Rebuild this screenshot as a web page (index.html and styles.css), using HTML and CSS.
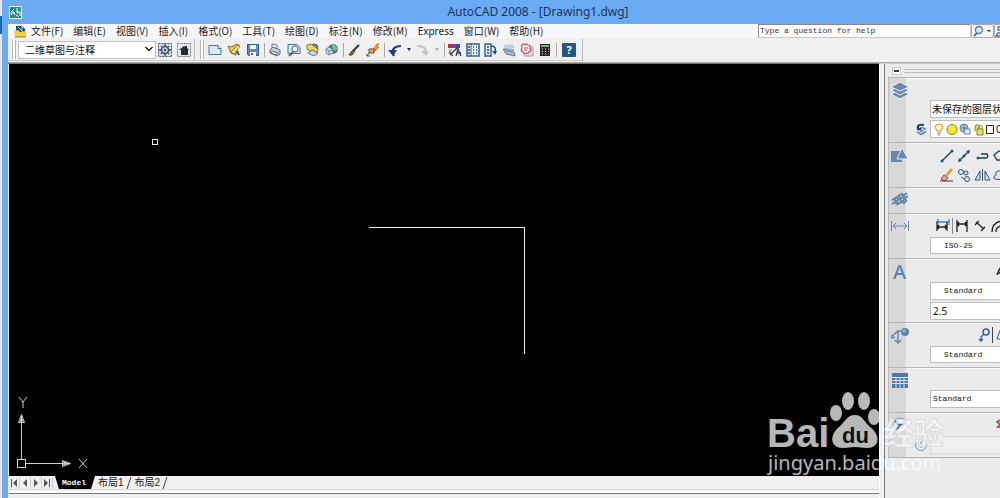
FILE: index.html
```html
<!DOCTYPE html>
<html lang="zh-CN">
<head>
<meta charset="utf-8">
<title>AutoCAD 2008 - [Drawing1.dwg]</title>
<link rel="stylesheet" href="styles.css">
</head>
<body>
<div class="edge"><span class="edge-tab"></span></div>
<div class="window">
  <header class="titlebar">
    <svg class="app-icon" width="13" height="13" viewBox="0 0 13 13"><rect width="13" height="13" fill="#e4f3ef"/><rect x="1" y="1" width="11" height="11" fill="#2b8f86"/><path d="M2 9L4 3l2 6M3 7h3M8 2v8M8 6h3v4H8" stroke="#fff" fill="none"/><path d="M2 2l9 9" stroke="#145a5c"/></svg>
    <h1>AutoCAD 2008 - [Drawing1.dwg]</h1>
  </header>

  <nav class="menubar">
    <svg width="13" height="13" viewBox="0 0 13 13"><path d="M2 1h6l3 3v6H2z" fill="#234a78"/><path d="M4 2l5 5M8 1v4" stroke="#b9d4ec"/><path d="M0 6l4-1 2 2 6-1v6H1z" fill="#f2cf3e"/><path d="M1 12h11" stroke="#a87d14"/></svg>
    <button>文件(F)</button><button>编辑(E)</button><button>视图(V)</button><button>插入(I)</button><button>格式(O)</button><button>工具(T)</button><button>绘图(D)</button><button>标注(N)</button><button>修改(M)</button><button class="latin">Express</button><button>窗口(W)</button><button>帮助(H)</button>
    <div class="help">
      <input type="text" aria-label="Help" value="Type a question for help">
      <button class="search" aria-label="Search"><svg width="20" height="12" viewBox="0 0 20 12"><circle cx="7" cy="5" r="3.5" fill="#dbe8f8" stroke="#5974a0" stroke-width="1.3"/><path d="M5 8L2 11" stroke="#5974a0" stroke-width="2"/><path d="M15 5h4l-2 2z" fill="#333"/></svg></button>
      <button class="more" aria-label="Communication center"><svg width="6" height="12" viewBox="0 0 6 12"><path d="M6 2H3v3h3M6 8H3l-2 3h5" fill="none" stroke="#5974a0" stroke-width="1.4"/></svg></button>
    </div>
  </nav>

  <div class="toolbars">
    <div class="toolbar">
      <span class="grip"></span>
      <select class="workspace" aria-label="Workspace"><option>二维草图与注释</option></select>
      <div class="tools">
        <button aria-label="Workspace settings"><svg width="14" height="14" viewBox="0 0 14 14"><rect x=".5" y=".5" width="13" height="13" fill="#d0dce8" stroke="#44597a" stroke-dasharray="2 1"/><circle cx="7" cy="7" r="3.5" fill="none" stroke="#3b4b60" stroke-width="1.5"/><circle cx="7" cy="7" r="1.2" fill="#34455c"/><path d="M7 1v2M7 11v2M1 7h2M11 7h2M3 3l1 1M10 10l1 1M11 3l-1 1M4 10l-1 1" stroke="#34455c" stroke-width="1.3"/></svg></button>
        <button aria-label="My workspace"><svg width="14" height="14" viewBox="0 0 14 14"><rect x=".5" y=".5" width="13" height="13" fill="#e4e6e8" stroke="#778" stroke-dasharray="2 1"/><path d="M2 7l5-4 1 1V3h2v2l2 2h-1v5H4V7z" fill="#222a33"/></svg></button>
      </div>
    </div>
    <div class="toolbar standard">
      <span class="grip"></span>
      <div class="tools">
        <button aria-label="New"><svg width="14" height="14" viewBox="0 0 14 14"><path d="M1 2.5h9l3 3v6H1z" fill="#d8ebfa" stroke="#4f7395"/><path d="M10 2.5v3h3" fill="#fff" stroke="#4f7395"/></svg></button>
        <button aria-label="Open"><svg width="14" height="14" viewBox="0 0 14 14"><path d="M1 3l4 1 1-1 5-2-2 11-5-2z" fill="#efc94e" stroke="#8f6c1d"/><path d="M4 9l7-7 2 1-6 8z" fill="#fff0a6" stroke="#8f6c1d"/><path d="M10 8l2 4" stroke="#43617e" stroke-width="2"/></svg></button>
        <button aria-label="Save"><svg width="14" height="14" viewBox="0 0 14 14"><path d="M1.5 1.5h11v11h-10l-1-1z" fill="#5e8ac0" stroke="#325b90"/><path d="M4 2h6v4H4z" fill="#e8f1fa"/><path d="M4 9h6v4H4z" fill="#fff"/><path d="M5 10h2v2H5z" fill="#325b90"/></svg></button>
        <i class="sep"></i>
        <button aria-label="Plot"><svg width="14" height="14" viewBox="0 0 14 14"><path d="M4 1l5 1v4l-5-1z" fill="#fff" stroke="#60758e"/><path d="M2 7l3-3 7 3v4l-3 2-7-3z" fill="#c5cfdd" stroke="#536b87"/><path d="M4 8l6 2-2 2-5-2z" fill="#fff" stroke="#536b87"/></svg></button>
        <button aria-label="Plot preview"><svg width="14" height="14" viewBox="0 0 14 14"><path d="M1 1.5h9l3 3v6H1z" fill="#cfe3f4" stroke="#4f7395"/><circle cx="8" cy="6" r="3" fill="#eef7ff" stroke="#426384"/><path d="M6 9l-4 4" stroke="#426384" stroke-width="2"/></svg></button>
        <button aria-label="Publish"><svg width="14" height="14" viewBox="0 0 14 14"><circle cx="8" cy="5" r="4" fill="#5b89b8" stroke="#345b83"/><path d="M1 2l4-1 7 5-1 3-4 1-6-4z" fill="#f1d35b" stroke="#8f792a"/><path d="M2 10l4-3 6 3-4 3z" fill="#cddae7" stroke="#5b7190"/></svg></button>
        <button aria-label="3D DWF"><svg width="14" height="14" viewBox="0 0 14 14"><circle cx="8" cy="6" r="5" fill="#3f7da0"/><path d="M6 1l4 1 3 4-3 2-2-2z" fill="#86bb8a"/><path d="M1 6l3-2 4 3v3l-4 2-3-2z" fill="#d0dde8" stroke="#71869b"/><path d="M1 6l3 2 4-1M4 8v4" fill="none" stroke="#71869b"/></svg></button>
        <i class="sep"></i>
        <button aria-label="Match properties"><svg width="14" height="14" viewBox="0 0 14 14"><path d="M12 2L6 8" stroke="#333" stroke-width="2"/><path d="M6 7l2 1-3 4H2l2-3z" fill="#a85828" stroke="#55331f"/></svg></button>
        <button aria-label="Block editor"><svg width="14" height="14" viewBox="0 0 14 14"><path d="M11 1L7 6h3l-2 3 5-5h-3l3-3z" fill="#ffd438" stroke="#a77916"/><path d="M3 6h5v4H3z" fill="#f0a05b" stroke="#74492b"/><path d="M3 10l-2 3M1 11v2h3" stroke="#405370" fill="none"/></svg></button>
        <i class="sep"></i>
        <button aria-label="Undo"><svg width="14" height="14" viewBox="0 0 14 14"><path d="M6 13C3 8 5 3 13 3" fill="none" stroke="#1d3f76" stroke-width="2.2"/><path d="M0 7h9L5 13z" fill="#1d3f76"/></svg></button>
        <button class="drop" aria-label="Undo list"><svg width="6" height="4" viewBox="0 0 6 4"><path d="M1 0h4L3 3z" fill="#1b2c55"/></svg></button>
        <button aria-label="Redo"><svg width="14" height="14" viewBox="0 0 14 14"><path d="M1 3c7 0 10 3 8 7" fill="none" stroke="#bfc2c6" stroke-width="2"/><path d="M5 8h8l-3 5z" fill="#bfc2c6"/></svg></button>
        <button class="drop" aria-label="Redo list"><svg width="6" height="4" viewBox="0 0 6 4"><path d="M1 0h4L3 3z" fill="#aaa"/></svg></button>
        <i class="sep"></i>
        <button aria-label="Properties"><svg width="14" height="14" viewBox="0 0 14 14"><path d="M0 1h4v4H0z" fill="#bd3030"/><path d="M4 1h4v4H4z" fill="#8d39ac"/><path d="M8 1h4v4H8z" fill="#3153b8"/><path d="M1 6h3v3H1z" fill="#e0b040"/><path d="M2 12l7-7 2 2M8 13l2-7 3 7M9 10h4M1 9l4 4" fill="none" stroke="#38404e" stroke-width="1.3"/></svg></button>
        <button aria-label="DesignCenter"><svg width="14" height="14" viewBox="0 0 14 14"><rect x="1" y="1" width="12" height="12" fill="#e6f0f7" stroke="#385d7f" stroke-width="1.5"/><path d="M5 1v12" stroke="#385d7f"/><path d="M2 4h2M2 7h2M2 10h2M7 4h1M10 4h1M7 7h1M10 7h1M7 10h1M10 10h1" stroke="#254e74" stroke-width="1.6"/></svg></button>
        <button aria-label="Tool palettes"><svg width="14" height="14" viewBox="0 0 14 14"><path d="M1 1h6v12H1z" fill="#dceaf5" stroke="#385d7f" stroke-width="1.4"/><path d="M3 4h2M3 7h2M3 10h2" stroke="#254e74" stroke-width="1.5"/><path d="M7 3c4 0 5 2 4 7" fill="none" stroke="#254e74" stroke-width="1.5"/><path d="M8 8h5l-2 4z" fill="#254e74"/></svg></button>
        <button aria-label="Sheet set"><svg width="14" height="14" viewBox="0 0 14 14"><path d="M1 2l10-1 2 4-10 1z" fill="#bdd1df"/><path d="M2 5l10 1v3L3 8z" fill="#91afc3"/><path d="M1 6l4 2 7 1 1 4-9-2z" fill="#aabfcd" stroke="#638097"/></svg></button>
        <button aria-label="Markup set"><svg width="14" height="14" viewBox="0 0 14 14"><path d="M4 4h9v9H4z" fill="#d8dce6" stroke="#9aa3b3"/><path d="M2 2q1.500-2 3 0q1.500-2 3 0q3 0 2 3q2 2-1 4q-1 2-3 1q-2 1-3-1q-3-1-1-4q-1-2 0-3z" fill="#fff3f3" stroke="#d04450" stroke-width="1.2"/><path d="M4 5h4M4 7h3" stroke="#d04450"/></svg></button>
        <button aria-label="Calculator"><svg width="14" height="14" viewBox="0 0 14 14"><path d="M2 1h10v12H2z" fill="#292321"/><path d="M3 2h8v2H3z" fill="#75b685"/><path d="M4 6h1M7 6h1M10 6h1M4 8.500h1M7 8.500h1M4 11h1M7 11h1" stroke="#eee"/><path d="M10 8.500h1M10 11h1" stroke="#e95353"/></svg></button>
        <i class="sep"></i>
        <button class="about" aria-label="Help">?</button>
      </div>
    </div>
  </div>

  <div class="workarea">
    <section class="document">
      <main class="model">
        <svg class="drawing" width="560" height="300" viewBox="0 0 560 300" shape-rendering="crispEdges"><path d="M360 163.500h155.500v126" fill="none" stroke="#eee"/><rect x="143.500" y="75.500" width="5" height="5" fill="none" stroke="#eee"/></svg>
        <svg class="ucs" width="84" height="82" viewBox="0 0 84 82" fill="none" stroke="#d0d0d0"><rect x="8.500" y="65.500" width="8" height="8"/><path d="M12.500 65V22M17 69.500h44M9.500 28.500l3-8 3 8zM11 28l1.500-5 1.500 5M53.500 66.500l8 3-8 3zM54 68l5 1.500-5 1.500"/><path d="M10 3l4 5 4-5M14 8v6M70 65l8 9M78 65l-8 9"/></svg>
      </main>
      <div class="tabs">
        <button class="nav" aria-label="First"><svg width="8" height="8" viewBox="0 0 8 8"><path d="M1 0v8h1V0zM7 0v8L3 4z" fill="#555"/></svg></button><button class="nav" aria-label="Previous"><svg width="8" height="8" viewBox="0 0 8 8"><path d="M6 0v8L2 4z" fill="#555"/></svg></button><button class="nav" aria-label="Next"><svg width="8" height="8" viewBox="0 0 8 8"><path d="M2 0v8l4-4z" fill="#555"/></svg></button><button class="nav" aria-label="Last"><svg width="8" height="8" viewBox="0 0 8 8"><path d="M1 0v8l4-4zM6 0v8h1V0z" fill="#555"/></svg></button>
        <button class="tab active">Model</button><button class="tab">布局1</button><svg width="6" height="12" viewBox="0 0 6 12"><path d="M1 12L5 0" stroke="#444"/></svg><button class="tab">布局2</button><svg width="6" height="12" viewBox="0 0 6 12"><path d="M1 12L5 0" stroke="#444"/></svg>
      </div>
      <div class="command"></div>
    </section>

    <aside class="dashboard">
      <div class="dash-head"><button aria-label="Minimize"></button><span></span></div>
      <section class="panel tall">
        <div class="side"><svg width="18" height="18" viewBox="0 0 18 18" stroke="#eef3f8"><path d="M0 12l9-4 9 4-9 5z" fill="#6689ad"/><path d="M0 8l9-4 9 4-9 5z" fill="#6689ad"/><path d="M0 5l9-5 9 5-9 4z" fill="#6689ad"/></svg></div>
        <div class="body low">
          <div class="field cjk">未保存的图层状</div>
          <div class="layer-row">
            <svg width="14" height="14" viewBox="0 0 14 14"><path d="M1 10l7-3 6 3-7 4zM1 7l7-3 6 3-7 4z" fill="#6689ad" stroke="#eef"/><path d="M5 8C2 4 5 2 10 3M3 7h4" fill="none" stroke="#213f66" stroke-width="2"/></svg>
            <div class="field icons">
              <svg width="62" height="13" viewBox="0 0 62 13"><path d="M3 8Q0 4 2 2q3-2 6 0q2 2-1 6z" fill="#fff5a0" stroke="#aa9a45"/><path d="M3 10h4M4 12h2" stroke="#777"/><circle cx="18" cy="6.500" r="5" fill="#eff02c" stroke="#7c8220"/><circle cx="30" cy="5" r="4" fill="#a8c5d8" stroke="#5e8199"/><path d="M31 6h5v5h-6z" fill="#e1eef5" stroke="#68889e"/><path d="M27 5h6M30 2v6" stroke="#5e8199"/><path d="M41 8V3q2-3 4 0v3M43 6h6v6h-6z" fill="#e8e05b" stroke="#8a8422"/><path d="M45 6V3q2-2 3 0v3" fill="none" stroke="#8a8422"/><path d="M52.500 2.500h7v8h-7z" fill="#fff" stroke="#222"/></svg><span>0</span>
            </div>
          </div>
        </div>
      </section>
      <section class="panel">
        <div class="side"><svg width="18" height="18" viewBox="0 0 18 18"><path d="M0 4h11v11H0z" fill="#6788ab"/><path d="M11 1l6 11H6z" fill="#6788ab" stroke="#e8edf3"/></svg></div>
        <div class="body palette">
          <svg width="61" height="14" viewBox="0 0 61 14"><g fill="none" stroke="#24384f" stroke-width="1.3"><path d="M3 12L13 2M20 12L30 2M38 9h9q3-1 1-4h-6"/><path d="M55 6l5-4 4 2v7h-6z" fill="#eee"/></g><g fill="#24577f"><circle cx="3" cy="12" r="1.500"/><circle cx="13" cy="2" r="1.500"/><circle cx="25" cy="7" r="1.500"/><circle cx="39" cy="9" r="1.500"/><path d="M27 2l4-1-1 4zM19 13l1-4 3 3z"/></g></svg>
          <svg width="61" height="14" viewBox="0 0 61 14"><path d="M13 1L7 8" stroke="#d9a846" stroke-width="3"/><path d="M5 7l4 3-3 3-4-2z" fill="#e6a0a0" stroke="#9b4b46"/><path d="M1 13h13" stroke="#333"/><g fill="#dbe6f0" stroke="#36506d"><circle cx="22" cy="4" r="2.500"/><circle cx="27" cy="5" r="2"/><circle cx="28" cy="11" r="2.500"/><path d="M22 9l3 2"/><path d="M41 3v9h-5zM46 3v9h5zM43.500 1v12"/><path d="M56 11q-3-2 1-4q-1-4 3-4q2-3 4 0v9z"/></g></svg>
        </div>
      </section>
      <section class="panel mini">
        <div class="side"><svg width="18" height="16" viewBox="0 0 18 16" fill="none" stroke="#6788ab" stroke-width="2"><path d="M1 12l5-3 1 3 5-3 1 2 3-3M1 8l5-3 1 3 5-3 1 2 4-3M7 4l4-2 1 2 4-3"/><path d="M3 6l3 7M8 4l3 7M12 2l3 7"/></svg></div><div class="body"></div>
      </section>
      <section class="panel">
        <div class="side"><svg width="18" height="18" viewBox="0 0 18 18"><path d="M.5 3v10M17.500 3v10M2 8h14M5 5L2 8l3 3M13 5l3 3-3 3" fill="none" stroke="#6788ab"/></svg></div>
        <div class="body dims">
          <svg width="65" height="16" viewBox="0 0 65 16"><g fill="none" stroke="#222" stroke-width="1.300"><path d="M2 3v10M12 3v10M2 9h10M4 7L2 9l2 2M10 7l2 2-2 2"/><path d="M3 1v6M14 1v6M3 4h11" stroke="#557fa8"/><path d="M22 2v12M32 2v12M22 6h10M24 4l-2 2 2 2M30 4l2 2-2 2M41 4l8 7M40 7l4-4M46 13l4-4"/><path d="M57 14q0-9 9-11M61 14q0-5 5-6" /></g><path d="M17.500 0v16" stroke="#888"/></svg>
          <div class="field mono inset">ISO-25</div>
        </div>
      </section>
      <section class="panel text-panel">
        <div class="side letter">A</div>
        <div class="body low">
          <svg class="cut" width="4" height="10" viewBox="0 0 4 10"><path d="M4 2L1 9M2 7h2" stroke="#222" stroke-width="1.500"/></svg>
          <div class="field mono inset">Standard</div>
          <div class="field plain">2.5</div>
        </div>
      </section>
      <section class="panel">
        <div class="side"><svg width="18" height="18" viewBox="0 0 18 18"><path d="M1 9l6-5h6M7 4v12M4 13l3 3 3-3M0 8l1 3 3-1" fill="none" stroke="#6788ab" stroke-width="1.500"/><circle cx="14" cy="5" r="4" fill="#6084ad"/><circle cx="13" cy="4" r="1.500" fill="#a9c0d7"/></svg></div>
        <div class="body dims">
          <svg width="22" height="16" viewBox="0 0 22 16"><circle cx="8" cy="5" r="3" fill="#e8f0f8" stroke="#345f90" stroke-width="1.500"/><path d="M6 7l-3 3v4M1 12l2 2 2-2" fill="none" stroke="#345f90" stroke-width="1.300"/><path d="M14.500 0v16" stroke="#444"/><path d="M22 3l-3 9h3" stroke="#345f90" fill="none"/></svg>
          <div class="field mono inset">Standard</div>
        </div>
      </section>
      <section class="panel">
        <div class="side"><svg width="18" height="18" viewBox="0 0 18 18"><path d="M1 1h16v15H1z" fill="#4f76a5"/><path d="M1 5.500h16M1 8.500h16M1 11.500h16M5 5v11M9 5v11M13 5v11" stroke="#dce6f1"/></svg></div>
        <div class="body low"><div class="field mono">Standard</div></div>
      </section>
      <section class="panel">
        <div class="side"><svg width="18" height="18" viewBox="0 0 18 18"><circle cx="9" cy="8" r="7" fill="#e5ecf3" stroke="#7792b0"/><path d="M4 4l5 4 5-3M9 8l-4 5" fill="none" stroke="#47698e" stroke-width="2"/></svg></div>
        <div class="body nav-body"><svg width="4" height="10" viewBox="0 0 4 10"><path d="M4 1L1 3l3 2-2 3h2" fill="none" stroke="#b85b50" stroke-width="2"/></svg>
          <div class="layer-row"><svg width="14" height="14" viewBox="0 0 14 14"><circle cx="7" cy="7" r="5.500" fill="#e7edf3" stroke="#7c92ad"/><path d="M7 3v7M4 7l3 3 3-3" fill="none" stroke="#5f7da0"/></svg><div class="field disabled"></div></div></div>
      </section>
    </aside>
  </div>
</div>

<svg class="watermark" width="190" height="94" viewBox="0 0 190 94">
  <g fill="#fff" fill-opacity=".72">
    <text class="wm-bold" x="7" y="63">Bai</text>
    <ellipse cx="76" cy="29" rx="6" ry="8"/><ellipse cx="88" cy="17" rx="6" ry="9"/><ellipse cx="104" cy="17" rx="6" ry="9"/><ellipse cx="114" cy="33" rx="6" ry="8"/>
    <path d="M95 31c8 0 9 7 15 12c11 8 10 21-3 21c-5 0-7-1-12-1s-7 1-12 1c-13 0-14-13-4-21c7-6 8-12 16-12z"/>
    <text class="wm-url" x="8" y="86">jingyan.baidu.com</text>
    <text class="wm-cjk" x="124" y="60">经验</text>
  </g>
  <text class="wm-du" x="82" y="59">du</text>
</svg>
</body>
</html>
```

FILE: styles.css
```css
* { box-sizing: border-box; }
body { margin: 0; height: 100vh; display: flex; overflow: hidden; background: #f0f0f0; color: #222; font: 10px/14px "Noto Sans", "Noto Sans CJK SC", sans-serif; }
button { border: 0; padding: 0; margin: 0; background: none; color: inherit; font: inherit; }
svg { display: block; flex: none; }
.edge { flex: 0 0 8px; background: #6babf6; border-left: 2px solid #e4e8ec; }
.edge-tab { display: block; width: 2px; height: 18px; margin: 16px 0 0 -2px; background: #1869ad; }
.window { flex: 1; min-width: 0; display: flex; flex-direction: column; }

.titlebar { height: 24px; display: grid; grid-template-columns: 16px 1fr 16px; align-items: center; background: #6babf6; }
.app-icon { margin-left: 1px; }
.titlebar h1 { margin: 0; padding-left: 68px; text-align: center; font: 12px/16px "Noto Sans", sans-serif; color: #1c3550; }

.menubar { height: 14px; display: flex; align-items: center; gap: 10px; padding-left: 6px; background: #f6f7f9; white-space: nowrap; font-family: "Noto Sans CJK SC", sans-serif; }
.menubar > svg { margin-right: -6px; }
.menubar .latin { font-family: "Noto Sans", sans-serif; }
.help { flex: 0 0 242px; height: 14px; display: flex; margin-left: auto; }
.help input { flex: 1; min-width: 0; padding: 0 1px; border: 1px solid #c8c8c8; border-top-color: #888; border-left-color: #999; background: #fff; color: #333; font: 8px/12px "Liberation Mono", monospace; }
.search { width: 23px; border: 1px solid #aaa; border-radius: 2px; background: #f4f6f9; }
.more { width: 6px; border: 1px solid #aaa; border-right: 0; background: #f4f6f9; overflow: hidden; }

.toolbars { height: 25px; display: flex; align-items: center; background: #f0f0f0; border-bottom: 1px solid #aaa; }
.toolbar { height: 22px; display: flex; align-items: center; padding-left: 4px; border-right: 1px solid #bbb; border-bottom: 1px solid #ccc; }
.toolbar.standard { padding-left: 5px; }
.grip { width: 4px; height: 19px; margin-right: 2px; border-left: 1px solid #b4b4b4; border-right: 1px solid #b4b4b4; background: #fff; }
.workspace { width: 138px; height: 18px; appearance: none; padding: 0 16px 0 6px; border: 1px solid #c2c2c2; border-radius: 0; color: #111; font: 10px/14px "Noto Sans CJK SC", sans-serif; background: linear-gradient(45deg, transparent 50%, #333 50% 70%, transparent 70%) right 6px top 5px / 4px 5px no-repeat, linear-gradient(-45deg, transparent 50%, #333 50% 70%, transparent 70%) right 2px top 5px / 4px 5px no-repeat, #fff; }
.tools { display: flex; align-items: center; padding-right: 1px; }
.standard .tools { padding-right: 4px; }
.tools button { width: 18px; height: 18px; display: grid; place-items: center; }
.tools button + button { margin-left: 1px; }
.tools .drop { width: 10px; margin-left: 0; }
.tools .drop + button, .tools .drop + .sep ~ button { margin-left: 0; }
.sep { width: 1px; height: 14px; margin: 0 1px 0 2px; background: #aaa; }
.tools .drop + .sep ~ .about { width: 14px; height: 14px; margin: 0 2px 0 4px; border-radius: 1px; background: #245783; color: #fff; font: bold 11px/14px "Noto Sans", sans-serif; }

.workarea { flex: 1; min-height: 0; display: flex; }
.document { flex: 1; min-width: 0; display: flex; flex-direction: column; padding-left: 1px; border-top: 1px solid #777; border-right: 1px solid #fff; }
.model { flex: 1; min-height: 0; position: relative; background: #000; overflow: hidden; }
.ucs { position: absolute; left: 0; bottom: 0; }
.tabs { height: 14px; display: flex; align-items: center; background: #f0f0f0; border-bottom: 1px solid #ddd; }
.nav { width: 11px; height: 12px; display: grid; place-items: center; border-right: 1px solid #ccc; }
.tab { height: 13px; font: 10px/12px "Liberation Sans", "Noto Sans CJK SC", sans-serif; color: #222; padding: 0 2px 0 3px; }
.active { margin-left: 2px; padding: 0 9px 0 7px; background: #000; color: #fff; font: bold 8px/12px "Liberation Mono", monospace; clip-path: polygon(0 0, 100% 0, 90% 100%, 10% 100%); }
.command { height: 7px; margin-top: 1px; background: linear-gradient(#fff 2px, #777 2px 3px, #eee 3px); }

.dashboard { flex: 0 0 120px; overflow: hidden; background: #ebebeb; border-top: 1px solid #ccc; padding-left: 6px; border-left: 2px solid #eee; box-shadow: inset 2px 0 #f4f4f4, inset 3px 0 #707070; }
.dash-head { height: 13px; display: flex; align-items: center; gap: 3px; padding-left: 4px; }
.dash-head button { width: 9px; height: 8px; border: 1px solid #ccc; background: linear-gradient(#333, #333) center / 5px 2px no-repeat, #fff; }
.dash-head span { flex: 1; height: 4px; border-top: 1px solid #bbb; border-bottom: 1px solid #bbb; }
.panel { display: flex; min-height: 45px; border-top: 1px solid #b5b5b5; border-left: 1px solid #bbb; box-shadow: inset 0 1px #f8f8f8; }
.tall { min-height: 65px; }
.text-panel { min-height: 64px; }
.mini { min-height: 26px; }
.panel:last-child { border-bottom: 1px solid #b5b5b5; min-height: 46px; }
.side { flex: 0 0 17px; min-width: 0; padding: 4px 0 0 2px; background: #d8d8d8; }
.letter { padding: 0 0 0 4px; font: 500 20px/26px "Noto Sans", sans-serif; color: #5c82aa; }
.body { flex: 1; min-width: 0; display: flex; flex-direction: column; align-items: flex-end; padding-bottom: 4px; }
.low { justify-content: flex-end; gap: 2px; }
.text-panel .low { padding-bottom: 2px; }
.field { width: 70px; height: 18px; flex: none; display: flex; align-items: center; padding-left: 2px; overflow: hidden; white-space: nowrap; background: #fff; border: 1px solid #bdbdbd; border-right: 0; color: #111; }
.cjk { font-family: "Noto Sans CJK SC", sans-serif; padding-left: 1px; }
.mono { font: 8px/12px "Liberation Mono", monospace; }
.inset { padding-left: 13px; }
.layer-row { display: flex; align-items: center; gap: 2px; }
.icons { padding-left: 3px; }
.palette { gap: 5px; padding: 6px 0 0; }
.dims { justify-content: space-between; padding-top: 4px; }
.dims .field { height: 17px; }
.cut { margin-bottom: 4px; }
.nav-body { justify-content: space-between; padding: 6px 0 3px; }
.disabled { background: #efefef; border-color: #d9d9d9; }

.watermark { position: absolute; right: 50px; bottom: 20px; pointer-events: none; }
.wm-bold { font: bold 40px "Liberation Sans", sans-serif; }
.wm-url { font: 20px "Noto Sans", sans-serif; }
.wm-cjk { font: bold 30px "Noto Sans CJK SC", sans-serif; stroke: #ddd; stroke-width: 1px; }
.wm-du { font: bold 22px "Liberation Sans", sans-serif; fill: #111; }
```
